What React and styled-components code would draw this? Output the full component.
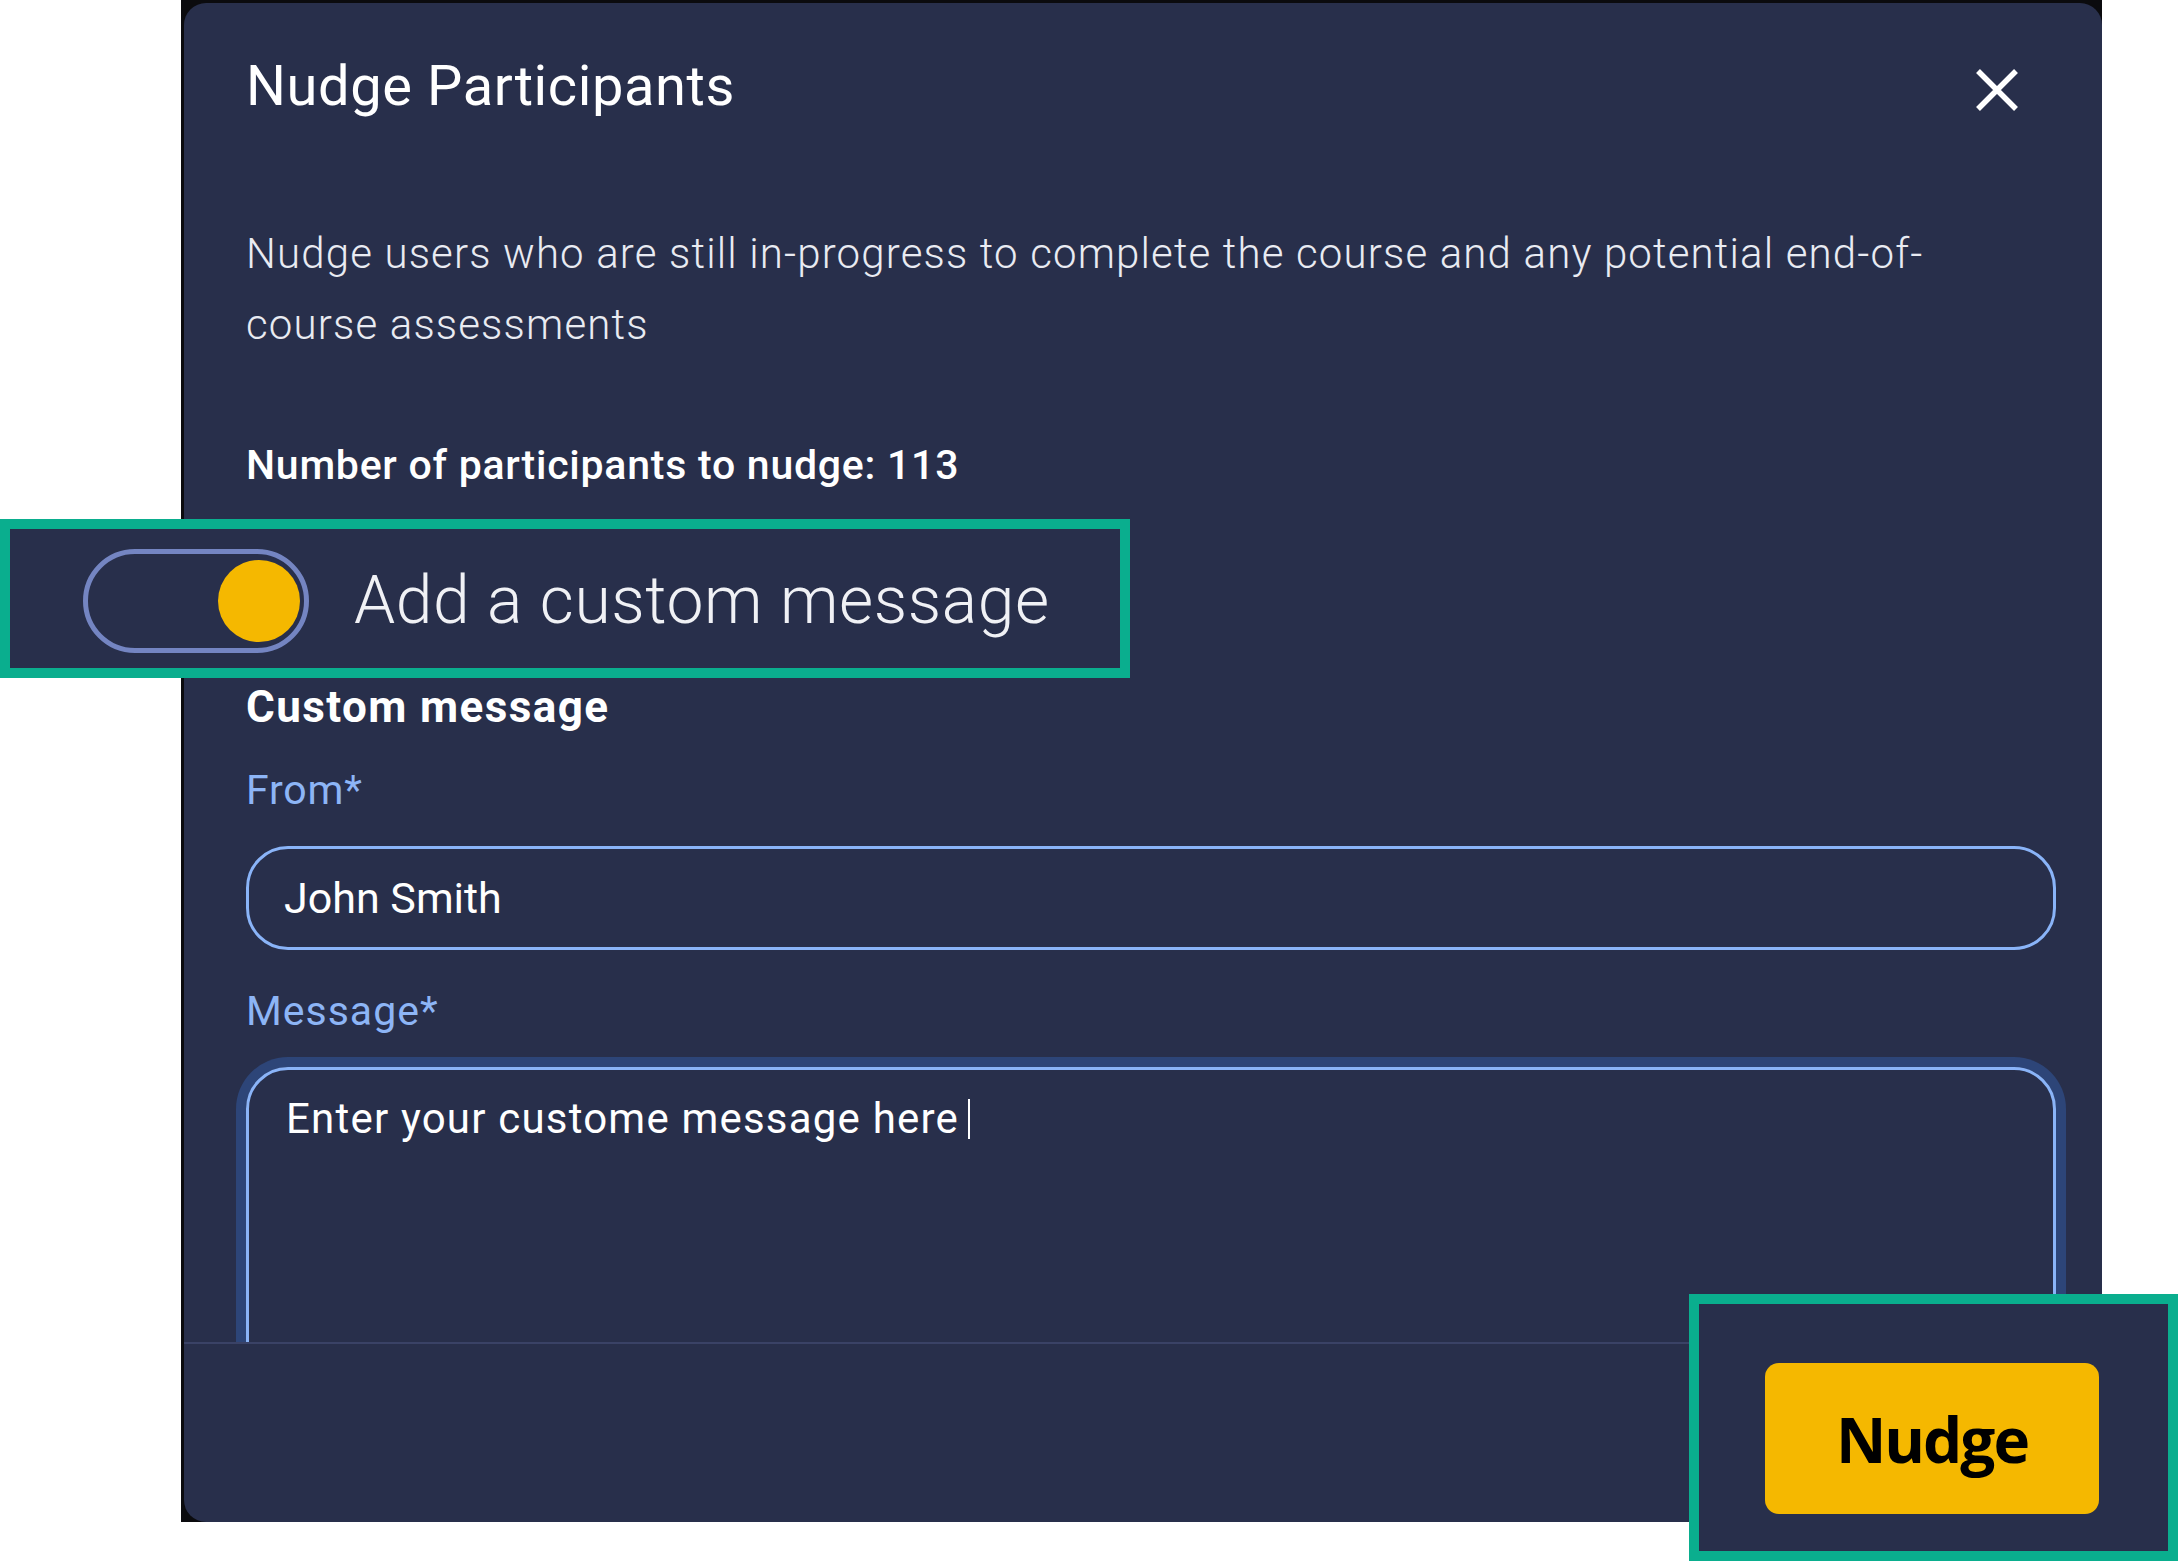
import React from "react";
import styled, { createGlobalStyle } from "styled-components";

const GlobalStyle = createGlobalStyle`
  html, body {
    margin: 0;
    padding: 0;
    background: #ffffff;
  }
  body {
    font-family: Roboto, "Liberation Sans", sans-serif;
  }
  * {
    box-sizing: border-box;
  }
`;

const App = () => {
  const [from, setFrom] = React.useState("John Smith");

  return (
    <React.Fragment>
      <GlobalStyle />
      <Page>
        <Backdrop>
          <Modal role="dialog" aria-label="Nudge Participants">
            <Header>
              <Title>Nudge Participants</Title>
              <CloseButton aria-label="Close">
                <svg width="42" height="42" viewBox="0 0 42 42">
                  <path
                    d="M2 2 L40 40 M40 2 L2 40"
                    stroke="#ffffff"
                    strokeWidth="5.5"
                    fill="none"
                  />
                </svg>
              </CloseButton>
            </Header>

            <Body>
              <Description>
                Nudge users who are still in-progress to complete the course and
                any potential end-of-
                <br />
                course assessments
              </Description>
              <Count>Number of participants to nudge: 113</Count>
              <ToggleSlot />
              <Heading>Custom message</Heading>
              <FieldLabel $spacing={0.8}>From*</FieldLabel>
              <Input value={from} onChange={(e) => setFrom(e.target.value)} />
              <FieldLabel $spacing={1}>Message*</FieldLabel>
              <MessageBox>
                Enter your custome message here
                <Caret />
              </MessageBox>
            </Body>

            <Footer />
          </Modal>
        </Backdrop>

        {/* enlarged callouts over the dialog */}
        <Callout $x={0} $y={519} $w={1130} $h={159}>
          <ToggleRow>
            <Track>
              <Knob />
            </Track>
            <ToggleLabel>Add a custom message</ToggleLabel>
          </ToggleRow>
        </Callout>

        <Callout $x={1689} $y={1294} $w={489} $h={267}>
          <ButtonWrap>
            <NudgeButton>Nudge</NudgeButton>
          </ButtonWrap>
        </Callout>
      </Page>
    </React.Fragment>
  );
};

const Page = styled.div`
  position: relative;
  width: 2178px;
  height: 1561px;
  overflow: hidden;
  display: flex;
  padding-left: 181px;
`;

const Backdrop = styled.div`
  width: 1921px;
  height: 1522px;
  background: #0b0b0e;
  padding: 3px 0 0 3px;
  display: flex;
`;

const Modal = styled.div`
  flex: 1;
  background: #282f4b;
  border-radius: 22px;
  display: flex;
  flex-direction: column;
  overflow: hidden;
`;

const Header = styled.div`
  display: flex;
  justify-content: space-between;
  align-items: flex-start;
  padding: 55px 84px 0 62px;
  flex-shrink: 0;
`;

const Title = styled.h2`
  margin: 0;
  font-size: 56px;
  line-height: 56px;
  font-weight: 400;
  letter-spacing: 0.6px;
  color: #ffffff;
`;

const CloseButton = styled.button`
  background: none;
  border: none;
  padding: 0;
  margin-top: 11px;
  width: 42px;
  height: 42px;
  cursor: pointer;
  svg {
    display: block;
  }
`;

const Body = styled.div`
  flex: 1;
  overflow: hidden;
  padding: 0 46px 0 62px;
  display: flex;
  flex-direction: column;
`;

const Description = styled.p`
  margin: 104px 0 0 0;
  font-size: 42px;
  font-weight: 300;
  line-height: 71px;
  letter-spacing: 1.15px;
  color: #e9ebf2;
  white-space: nowrap;
`;

const Count = styled.div`
  margin-top: 85px;
  font-size: 41px;
  line-height: 41px;
  font-weight: 500;
  letter-spacing: 0.75px;
  color: #ffffff;
`;

const ToggleSlot = styled.div`
  height: 200px;
  flex-shrink: 0;
`;

const Heading = styled.h3`
  margin: 0;
  font-size: 44px;
  line-height: 43px;
  font-weight: 700;
  letter-spacing: 1.4px;
  color: #ffffff;
`;

const FieldLabel = styled.label`
  display: block;
  margin-top: 41px;
  font-size: 41px;
  line-height: 41px;
  font-weight: 400;
  letter-spacing: ${(p) => p.$spacing || 0}px;
  color: #8db5f6;
`;

const Input = styled.input`
  margin-top: 35px;
  width: 100%;
  height: 104px;
  flex-shrink: 0;
  border: 3px solid #8ab4f8;
  border-radius: 42px;
  background: transparent;
  color: #ffffff;
  font-family: Roboto, "Liberation Sans", sans-serif;
  font-size: 43px;
  padding: 0 35px;
  outline: none;
`;

const MessageBox = styled.div`
  margin-top: 35px;
  flex-shrink: 0;
  min-height: 420px;
  border: 3px solid #8ab4f8;
  border-radius: 42px;
  box-shadow: 0 0 0 10px #2d4578;
  padding: 24px 37px;
  font-size: 42px;
  line-height: 50px;
  letter-spacing: 1.2px;
  color: #ffffff;
`;

const Caret = styled.span`
  display: inline-block;
  width: 2px;
  height: 40px;
  margin-left: 9px;
  vertical-align: -6px;
  background: #ffffff;
`;

const Footer = styled.div`
  height: 180px;
  flex-shrink: 0;
  border-top: 2px solid #3a4266;
`;

const Callout = styled.div`
  position: absolute;
  left: ${(p) => p.$x}px;
  top: ${(p) => p.$y}px;
  width: ${(p) => p.$w}px;
  height: ${(p) => p.$h}px;
  border: 10px solid #0aae8e;
  background: #282f4b;
`;

const ToggleRow = styled.div`
  height: 100%;
  display: flex;
  align-items: center;
  gap: 45px;
  padding: 5px 0 0 73px;
`;

const Track = styled.div`
  width: 226px;
  height: 104px;
  border: 5px solid #7485c2;
  border-radius: 52px;
  display: flex;
  align-items: center;
  justify-content: flex-end;
  padding-right: 4px;
`;

const Knob = styled.div`
  width: 82px;
  height: 82px;
  border-radius: 50%;
  background: #f5b800;
`;

const ToggleLabel = styled.span`
  font-size: 66px;
  line-height: 66px;
  font-weight: 300;
  letter-spacing: 0.6px;
  color: #f0f1f5;
`;

const ButtonWrap = styled.div`
  padding: 59px 0 0 66px;
`;

const NudgeButton = styled.button`
  width: 334px;
  height: 151px;
  background: #f5b800;
  border: none;
  border-radius: 14px;
  font-family: "Open Sans", "Noto Sans", sans-serif;
  font-weight: 700;
  font-size: 62px;
  letter-spacing: -2px;
  color: #000000;
  cursor: pointer;
  padding: 0;
`;

export default App;
